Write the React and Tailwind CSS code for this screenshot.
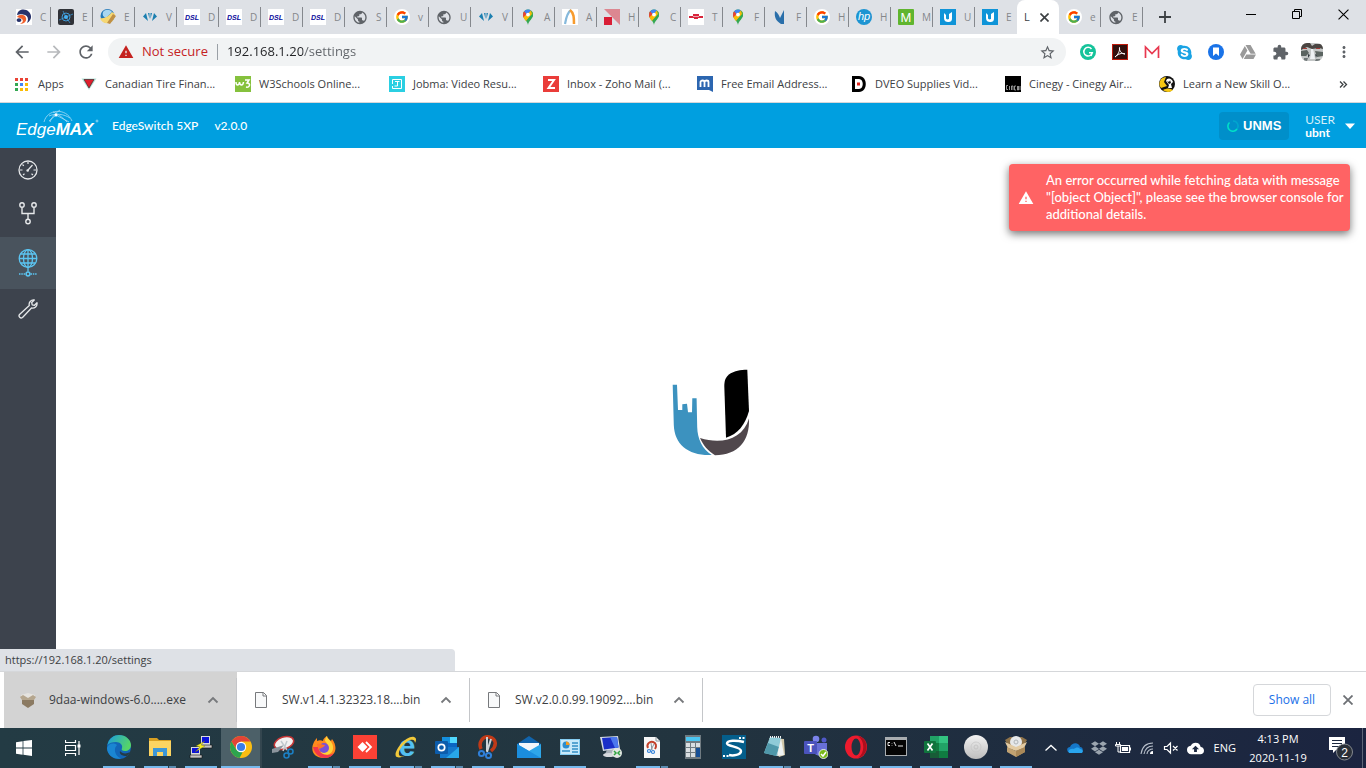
import React from "react";
import { FcGoogle } from "react-icons/fc";
import { FaDropbox, FaGoogleDrive, FaSkype } from "react-icons/fa";
import {
  MdArrowBack,
  MdArrowForward,
  MdCloudUpload,
  MdExtension,
  MdMoreVert,
  MdPublic,
  MdRefresh,
  MdStarBorder,
  MdWarning,
} from "react-icons/md";

const Svg = ({ size = 16, box = 16, children }) => (
  <svg width={size} height={size} viewBox={`0 0 ${box} ${box}`} fill="none" aria-hidden="true" className="block shrink-0">
    {children}
  </svg>
);

const Letter = ({ x = 8, y, size, fill = "#fff", weight = 700, style, children }) => (
  <text x={x} y={y} fontSize={size} fill={fill} fontWeight={weight} fontStyle={style} fontFamily="Liberation Sans, sans-serif" textAnchor="middle">
    {children}
  </text>
);

/* ---------- tab icons ---------- */

const RingIcon = () => (
  <Svg>
    <rect width="16" height="16" fill="#fff" />
    <path d="M1 6C2 0 9-1 13 3c3 3 3 8-2 11 2-4 1-8-4-8.500C4 5 3 6 1 6z" fill="#27326b" />
    <path d="M1 8c2-3 8-3 9 1 1 3-2 6-6 6 2-1 4-3 2-5-1-1-3-1-5-2z" fill="#f0602c" />
    <path d="M1 10c1-1 3-1 4 0s0 3-2 3-3-2-2-3z" fill="#27326b" />
  </Svg>
);

const AtomIcon = () => (
  <Svg>
    <rect width="16" height="16" rx="2" fill="#303238" />
    <path d="M8 8 1 11M8 8l7-3M8 8 5 2M8 8l4 6" stroke="#3a89c0" strokeWidth=".9" />
    <circle cx="8" cy="8" r="4" stroke="#3f9bd8" strokeWidth="1" />
    <circle cx="8" cy="8" r="2" fill="#46b1f5" />
  </Svg>
);

const PencilBallIcon = () => (
  <Svg>
    <circle cx="7.500" cy="7" r="7" fill="#2478b8" />
    <path d="M3 3c2-3 7-3 9 0L6 9C3 8 2 6 3 3z" fill="#a9d6f0" />
    <path d="M0 9c4 1 8-1 12-6l3 2c0 5-3 9-7 9-4 1-7-2-8-5z" fill="#f6d773" />
    <path d="m7 14 6-9 3 2-6 8z" fill="#c09045" />
  </Svg>
);

const FanIcon = () => (
  <Svg>
    <path d="M1 7.500 4 4l2 8zM15 7.500 12 4l-2 8zM6 4h1.500v6zM10 4H8.500v6z" fill="#1b7fb0" />
  </Svg>
);

const DslIcon = () => (
  <Svg>
    <rect width="16" height="16" fill="#fff" />
    <Letter y="11" size="7" fill="#08089a" style="italic">DSL</Letter>
  </Svg>
);

const GlobeIcon = () => <MdPublic size={17} color="#5f6368" />;

const GoogleIcon = () => (
  <span className="flex size-4 items-center justify-center rounded-full bg-white">
    <FcGoogle size={14} />
  </span>
);

const MapsIcon = () => (
  <Svg>
    <path d="M8 16C7.500 12 3 10 3 5.500A5 5 0 0 1 8 .5a5 5 0 0 1 5 5C13 10 8.500 12 8 16z" fill="#34a853" />
    <path d="M3.200 7.500 10 .9a5 5 0 0 1 2.900 4L6 12C4.500 10.300 3.500 9 3.200 7.500z" fill="#fbbc04" />
    <path d="M8 .5c1 0 2 .2 2.900.9L6.500 6.300 4 2.500A5 5 0 0 1 8 .5z" fill="#4285f4" />
    <path d="M4 2.300 6.700 5 3.300 8.500C2.800 6 3 4 4 2.300z" fill="#ea4335" />
    <path d="M10.900 1.400C13 3 13.500 5.500 12.500 8L6 12l6-7z" fill="#34a853" />
    <circle cx="8" cy="5.600" r="1.900" fill="#fff" />
  </Svg>
);

const ArcIcon = () => (
  <Svg>
    <rect width="16" height="16" fill="#fff" />
    <path d="M3 15C4 9 6 3 9 1" stroke="#86b9dc" strokeWidth="2.200" />
    <path d="M8 1c4 3 4 8 4 14" stroke="#f79b2e" strokeWidth="2.500" />
  </Svg>
);

const RedSquaresIcon = () => (
  <Svg>
    <path d="M0 0h16v16z" fill="#dc8791" />
    <path d="M0 8h8v8H0z" fill="#d91e36" />
  </Svg>
);

const TransitIcon = () => (
  <Svg>
    <rect width="16" height="16" fill="#fff" />
    <path d="M5 5h6v2h4v2h-5v1H6V9H1V7h4z" fill="#d8253c" />
    <path d="M5 7.500h6" stroke="#fff" strokeWidth=".6" />
  </Svg>
);

const WolfIcon = () => (
  <Svg>
    <path d="M3 2c3 2 4 4 5 7l4-8v14H9C4 12 2 8 3 2z" fill="#2a6faa" />
  </Svg>
);

const HpIcon = () => (
  <Svg>
    <circle cx="8" cy="8" r="8" fill="#1d94d2" />
    <Letter y="11" size="11" style="italic" weight="400">hp</Letter>
  </Svg>
);

const GreenMIcon = () => (
  <Svg>
    <rect width="16" height="16" rx="1" fill="#60b52f" />
    <Letter y="12.500" size="13" weight="400">M</Letter>
  </Svg>
);

const UbntIcon = () => (
  <Svg>
    <rect width="16" height="16" fill="#0f94d8" />
    <path d="M4 4v5c0 3 2 4 4 4 3 0 4-1 4-4V3l-3 2v5c-2 1-3 0-3-1V6z" fill="#fff" />
  </Svg>
);

const tabs = [
  { icon: RingIcon, title: "C" },
  { icon: AtomIcon, title: "E" },
  { icon: PencilBallIcon, title: "E" },
  { icon: FanIcon, title: "V" },
  { icon: DslIcon, title: "D" },
  { icon: DslIcon, title: "D" },
  { icon: DslIcon, title: "D" },
  { icon: DslIcon, title: "D" },
  { icon: GlobeIcon, title: "S" },
  { icon: GoogleIcon, title: "v" },
  { icon: GlobeIcon, title: "U" },
  { icon: FanIcon, title: "V" },
  { icon: MapsIcon, title: "A" },
  { icon: ArcIcon, title: "A" },
  { icon: RedSquaresIcon, title: "H" },
  { icon: MapsIcon, title: "C" },
  { icon: TransitIcon, title: "T" },
  { icon: MapsIcon, title: "F" },
  { icon: WolfIcon, title: "F" },
  { icon: GoogleIcon, title: "H" },
  { icon: HpIcon, title: "H" },
  { icon: GreenMIcon, title: "M" },
  { icon: UbntIcon, title: "U" },
  { icon: UbntIcon, title: "E" },
  { active: true, title: "L" },
  { icon: GoogleIcon, title: "e" },
  { icon: GlobeIcon, title: "E" },
];

const Cross = ({ size, stroke, width = 1 }) => (
  <Svg size={size} box={10}>
    <path d="m.5.5 9 9m0-9-9 9" stroke={stroke} strokeWidth={width} />
  </Svg>
);

const Tab = ({ tab, divider }) => {
  if (tab.active) {
    return (
      <div className="flex w-[42px] items-center gap-2 rounded-t-lg bg-white pl-[7px] text-[11px] text-[#3c4043]">
        <span className="w-2">{tab.title}</span>
        <button aria-label="Close tab">
          <Cross size={9} stroke="#3c4043" width={1.8} />
        </button>
      </div>
    );
  }
  const Icon = tab.icon;
  return (
    <button className="flex w-[42px] items-center pl-[7px] text-[10px] text-[#85878b]">
      <span className="flex w-4 justify-center">
        <Icon />
      </span>
      <span className="ml-2 w-2 text-left">{tab.title}</span>
      <span className={divider ? "ml-auto h-5 w-px bg-[#85888d]" : "hidden"} />
    </button>
  );
};

const TabStrip = () => (
  <div className="flex h-[34px] bg-[#dee1e6] pl-[9px]">
    {tabs.map((tab, i) => (
      <Tab key={i} tab={tab} divider={i !== 23} />
    ))}
    <button aria-label="New tab" className="ml-4">
      <Svg size={12} box={12}>
        <path d="M6 0v12M0 6h12" stroke="#3c4043" strokeWidth="1.800" />
      </Svg>
    </button>
    <div className="ml-auto flex h-7">
      <button aria-label="Minimize" className="flex w-[46px] items-center justify-center">
        <Svg size={10} box={10}>
          <path d="M0 5.500h10" stroke="#000" />
        </Svg>
      </button>
      <button aria-label="Restore" className="flex w-[46px] items-center justify-center">
        <Svg size={10} box={10}>
          <path d="M.5 2.500h7v7h-7zM2.500 2V.5h7v7H8" stroke="#000" />
        </Svg>
      </button>
      <button aria-label="Close" className="flex w-[46px] items-center justify-center">
        <Cross size={11} stroke="#000" />
      </button>
    </div>
  </div>
);

/* ---------- toolbar ---------- */

const GrammarlyIcon = () => (
  <Svg>
    <circle cx="8" cy="8" r="8" fill="#15c39a" />
    <path d="M11.500 5A4.300 4.300 0 1 0 12.300 8.700H9M12.300 8.700 11 12" stroke="#fff" strokeWidth="1.500" />
  </Svg>
);

const AcrobatIcon = () => (
  <Svg>
    <rect width="16" height="16" fill="#c11a0b" />
    <rect x="1" y="1" width="14" height="14" fill="#33100d" />
    <path d="M3 13c3-2 5-6 4.500-9.500C7 6 9 10 13 10c-3-1.500-7 0-10 3z" stroke="#fff" />
  </Svg>
);

const MailMIcon = () => (
  <Svg>
    <path d="M1.500 14V3L8 9.500 14.500 3v11" stroke="#e8384f" strokeWidth="1.700" />
  </Svg>
);

const SkypeIcon = () => <FaSkype size={17} color="#1aa3e4" />;

const SaveIcon = () => (
  <Svg>
    <circle cx="8" cy="8" r="8" fill="#1a73e8" />
    <path d="M5 3.500h6V12L8 9.500 5 12z" fill="#fff" />
  </Svg>
);

const DriveIcon = () => <FaGoogleDrive size={16} color="#9a9a9a" />;
const PuzzleIcon = () => <MdExtension size={17} color="#5f6368" />;

const AvatarIcon = () => (
  <svg width="22" height="18" viewBox="0 0 22 18" aria-hidden="true">
    <clipPath id="avatar">
      <rect width="22" height="18" rx="6" />
    </clipPath>
    <g clipPath="url(#avatar)">
      <path d="M0 0h22v18H0z" fill="#c3c6c6" />
      <path d="M0 0h9l2 3 3-2h8v5l-4-1-7 1-5-2-6 3z" fill="#4a4542" />
      <path d="M2 5h4v1H2zM15 5h4v1h-4z" fill="#a33a35" />
      <path d="m0 8 6-1 2 3-3 3H0zM14 8l8 1v4l-6 1z" fill="#5b6461" />
      <path d="M10 6h2l1 4 1 6H9l1-5z" fill="#eef1f4" />
      <path d="m7 11 2 1-2 3zM14 11l2 1-1 3z" fill="#333b40" />
      <path d="M3 15h4l-1 3H3zM15 16h4v2h-5z" fill="#6f7677" />
    </g>
  </svg>
);

const extensions = [
  { name: "Grammarly", icon: GrammarlyIcon },
  { name: "Acrobat", icon: AcrobatIcon },
  { name: "Mail", icon: MailMIcon },
  { name: "Skype", icon: SkypeIcon },
  { name: "Save page", icon: SaveIcon },
  { name: "Drive", icon: DriveIcon },
  { name: "Extensions", icon: PuzzleIcon },
  { name: "Profile", icon: AvatarIcon },
];

const Toolbar = () => (
  <div className="flex h-9 items-center bg-white pl-1.5 text-[#5f6368]">
    <button aria-label="Back" className="flex w-8 justify-center">
      <MdArrowBack size={20} />
    </button>
    <button aria-label="Forward" className="flex w-8 justify-center text-[#b7b9bc]">
      <MdArrowForward size={20} />
    </button>
    <button aria-label="Reload" className="flex w-8 justify-center">
      <MdRefresh size={20} />
    </button>
    <div className="ml-1.5 flex h-7 flex-1 items-center rounded-full bg-[#f1f3f4] pr-2.5 pl-2.5">
      <MdWarning size={16} color="#c5221f" />
      <span className="ml-2 text-[13px] text-[#c5221f]">Not secure</span>
      <span className="mx-[9px] h-4 w-px bg-[#9aa0a6]" />
      <input
        aria-label="Address"
        defaultValue="192.168.1.20/settings"
        className="min-w-0 flex-1 bg-[linear-gradient(90deg,#202124_76px,#5f6368_76px)] bg-clip-text text-[13px] text-transparent outline-none"
      />
      <button aria-label="Bookmark this page">
        <MdStarBorder size={17} />
      </button>
    </div>
    <div className="ml-1.5 flex">
      {extensions.map(({ name, icon: Icon }) => (
        <button key={name} aria-label={name} className="flex w-8 items-center justify-center">
          <Icon />
        </button>
      ))}
      <button aria-label="Menu" className="mr-1.5 flex w-8 items-center justify-center">
        <MdMoreVert size={18} />
      </button>
    </div>
  </div>
);

/* ---------- bookmarks ---------- */

const appDots = ["#ea4335", "#ea4335", "#ea4335", "#34a853", "#4285f4", "#fbbc04", "#34a853", "#fbbc04", "#fbbc04"];

const AppsIcon = () => (
  <Svg size={13} box={13}>
    {appDots.map((c, i) => (
      <rect key={i} x={(i % 3) * 5} y={Math.floor(i / 3) * 5} width="3" height="3" fill={c} />
    ))}
  </Svg>
);

const TireIcon = () => (
  <Svg>
    <path d="M.5 2.500h15L8 14z" fill="#b5dfd5" />
    <path d="M3 3.500h10L8 12z" fill="#df1f2d" stroke="#2c1619" strokeWidth=".6" />
  </Svg>
);

const W3Icon = () => (
  <Svg>
    <rect width="16" height="16" fill="#85c13d" />
    <path d="M1 6c0 4 3 4 3.500 0C5 10 8 10 8.500 6M10 4h4l-2 3c4 0 3 5-1 4" stroke="#fff" strokeWidth="1.500" />
  </Svg>
);

const JobmaIcon = () => (
  <Svg>
    <rect width="16" height="16" fill="#2bcfe2" />
    <path d="M3.500 8V3.500h9v9h-9V10M6 5.500h4.500M8.500 5.500V10H5.500" stroke="#fff" />
  </Svg>
);

const ZohoIcon = () => (
  <Svg>
    <rect width="16" height="16" fill="#ea3d3a" />
    <path d="M5 4h6l-5.500 8H12" stroke="#fff" strokeWidth="2" />
  </Svg>
);

const MailComIcon = () => (
  <Svg>
    <path d="M0 0h16v16l-4-2H0z" fill="#2c66b0" />
    <path d="M3.500 11V6c0-2 4-2 4 0v5-5c0-2 4-2 4 0v5" stroke="#fff" strokeWidth="1.800" />
  </Svg>
);

const DveoIcon = () => (
  <Svg>
    <path d="M1 0h7c9 0 9 16 0 16H1z" fill="#000" />
    <path d="M4 3h4c5 0 5 10 0 10H4z" fill="#fff" />
    <rect x="6" y="6.500" width="3" height="3" fill="#e2251c" />
  </Svg>
);

const CinegyIcon = () => (
  <Svg>
    <rect width="16" height="16" fill="#000" />
    <path d="M3 9.500H1.500v4H3M4.500 10v4M6.500 14v-4H8v4M11 10H9.500v4H11M12.500 10v4h1v-4M15 10v4" stroke="#b9b9b9" strokeWidth=".8" />
  </Svg>
);

const SkillIcon = () => (
  <Svg>
    <circle cx="8" cy="8" r="8" fill="#111" />
    <path d="M1 5c1-3 4-4 6-4L5 6l3 4-6 2C0 10 0 7 1 5z" fill="#f6c713" />
    <path d="M4 14c4-2 7-2 10 0-3 3-8 2-10 0z" fill="#f6c713" />
    <path d="M7 5c1-4 6-3 7 1l-2 2 1 4H9l1-3z" fill="#fff" />
    <path d="M8 5c1 1 3 1 3-1l1 3-2 1z" fill="#111" />
  </Svg>
);

const bookmarks = [
  { title: "Canadian Tire Finan...", icon: TireIcon },
  { title: "W3Schools Online...", icon: W3Icon },
  { title: "Jobma: Video Resu...", icon: JobmaIcon },
  { title: "Inbox - Zoho Mail (...", icon: ZohoIcon },
  { title: "Free Email Address...", icon: MailComIcon },
  { title: "DVEO Supplies Vid...", icon: DveoIcon },
  { title: "Cinegy - Cinegy Air...", icon: CinegyIcon },
  { title: "Learn a New Skill O...", icon: SkillIcon },
];

const BookmarksBar = () => (
  <div className="flex h-[33px] items-center border-b border-[#d5d7da] bg-white pb-1 pl-[15px] text-[11px] text-[#3c4043]">
    <a href="#apps" className="flex w-[66px] items-center gap-2.5">
      <AppsIcon />
      Apps
    </a>
    {bookmarks.map(({ title, icon: Icon }) => (
      <a key={title} href="#bookmark" className="flex w-[154px] items-center gap-2 whitespace-nowrap">
        <Icon />
        {title}
      </a>
    ))}
    <button aria-label="More bookmarks" className="mr-[18px] ml-auto">
      <Svg size={9} box={9}>
        <path d="m1 1.500 3 3-3 3m3.500-6 3 3-3 3" stroke="#3c4043" strokeWidth="1.300" />
      </Svg>
    </button>
  </div>
);

/* ---------- switch page ---------- */

const EdgeMaxLogo = () => (
  <svg width="84" height="36" viewBox="0 0 84 36" fill="none" role="img" aria-label="EdgeMAX">
    <path
      d="M28 14C31 1 50-1 56 13M33 8c7-3 15-2 21 2M37 4c6 2 12 8 14 10M44 2c-6 4-9 9-10 12M40 7l-7 6M40 7l13 7"
      stroke="#a7dcf5"
      strokeWidth=".8"
    />
    <circle cx="40" cy="7" r="1.500" fill="#fff" />
    <text x="0" y="27" fontSize="17" fill="#fff" fontStyle="italic" fontFamily="Liberation Sans, sans-serif">
      Edge
      <tspan fontWeight="700">MAX</tspan>
    </text>
    <circle cx="81" cy="13" r="1" stroke="#fff" strokeWidth=".5" />
  </svg>
);

const AppHeader = () => (
  <header className="flex h-[45px] items-center bg-[#009fe0] pr-[11px] pl-4 font-['Lato',sans-serif] text-xs text-white">
    <EdgeMaxLogo />
    <span className="ml-3 font-medium">EdgeSwitch 5XP</span>
    <span className="ml-4 font-medium">v2.0.0</span>
    <button className="ml-auto flex h-7 w-[70px] items-center justify-center gap-1 rounded-sm bg-[#008fca]">
      <Svg size={12} box={12}>
        <path d="M6 1a5 5 0 0 1 4 8" stroke="#00a6cf" strokeWidth="1.600" />
        <path d="M10 9A5 5 0 1 1 2.500 2.500" stroke="#00e0c8" strokeWidth="1.600" />
      </Svg>
      <span className="font-['Liberation_Sans',sans-serif] text-[13px] font-bold">UNMS</span>
    </button>
    <button className="ml-4 flex items-center gap-2.5 text-left leading-[13px]">
      <span>
        <span className="block text-[#d5effa]">USER</span>
        <span className="block font-bold">ubnt</span>
      </span>
      <Svg size={10} box={10}>
        <path d="M0 2.500h10L5 8z" fill="#fff" />
      </Svg>
    </button>
  </header>
);

const GaugeIcon = () => (
  <Svg size={20} box={20}>
    <circle cx="10" cy="10" r="9" stroke="#e6e8ea" strokeWidth="1.300" />
    <path d="M10 2v2M2 10h2.500M15.500 10H18M4.500 4.500l1.300 1.300M5 15l1.500-1.200M15 15l-1.500-1.200M10 10l4.500-5" stroke="#e6e8ea" strokeWidth="1.200" />
    <circle cx="9.700" cy="10.500" r="1.300" fill="#e6e8ea" />
  </Svg>
);

const PortsIcon = () => (
  <Svg size={24} box={24}>
    <g stroke="#e6e8ea" strokeWidth="1.400">
      <circle cx="6" cy="4" r="2.200" />
      <circle cx="18" cy="4" r="2.200" />
      <circle cx="12" cy="20.500" r="2.200" />
      <path d="M6 6.500v6h12v-6M12 12.500v6" />
    </g>
  </Svg>
);

const NetworkIcon = () => (
  <Svg size={28} box={28}>
    <g stroke="#5bc5f2" strokeWidth="1.300">
      <circle cx="14" cy="9.500" r="8.800" />
      <ellipse cx="14" cy="9.500" rx="4.500" ry="8.800" />
      <path d="M14 .5v22M5 9.500h18M6.500 5h15M6.500 14h15" />
      <circle cx="14" cy="25" r="1.900" strokeWidth="1.500" />
      <path d="M5 25h6.500M16.500 25H23" strokeDasharray="1.500 .8" />
    </g>
  </Svg>
);

const WrenchIcon = () => (
  <Svg size={20} box={20}>
    <path
      d="M11.300 6.500c-.8-2.800 1.500-6 5-5.500l-2.600 2.500.5 2.300 2.300.5L19 3.700c.6 3.500-2.500 6-5.500 5.300L4.500 18.500c-2 1.500-4.500-1-3-3z"
      stroke="#e6e8ea"
      strokeWidth="1.300"
      strokeLinejoin="round"
    />
  </Svg>
);

const Sidebar = () => (
  <nav className="w-14 shrink-0 bg-[#3d434d]">
    <a href="#dashboard" aria-label="Dashboard" className="flex h-11 items-center justify-center">
      <GaugeIcon />
    </a>
    <a href="#ports" aria-label="Ports" className="flex h-[45px] items-center justify-center pb-1">
      <PortsIcon />
    </a>
    <a href="#settings" aria-label="Settings" className="flex h-[52px] items-center justify-center bg-[#49535d]">
      <NetworkIcon />
    </a>
    <a href="#tools" aria-label="Tools" className="flex h-11 items-center justify-center pb-1">
      <WrenchIcon />
    </a>
  </nav>
);

const Loader = () => (
  <svg width="78" height="88" viewBox="0 0 78 88" role="img" aria-label="Loading">
    <path
      d="M.7 15.700H5L6 41h4.300v-5.700l4.700-.6 1 8.600h4l.3-14h4.300L25.200 58c.3 12 5 22 14.500 28C17 87 2.500 76 1.800 56z"
      fill="#3c92bf"
    />
    <path d="M75.300.7 77 42C73 56 66 65 54 68.700L52.300 17C52 5 61 1 75.300.7z" fill="#000" />
    <path d="M28 69c22 7 43 1 49-19.500C78 72 66 86 43 86.300 36 82 31 76 28 69z" fill="#50474c" />
  </svg>
);

const Toast = () => (
  <div
    role="alert"
    className="absolute top-4 right-4 flex w-[341px] items-center gap-3 rounded-sm bg-[#ff6364] py-2 pl-[9px] font-['Lato',sans-serif] text-[13px] leading-[17px] font-medium text-white shadow-[0_3px_8px_rgba(0,0,0,0.55)]"
  >
    <MdWarning size={16} className="shrink-0" />
    <p>
      An error occurred while fetching data with message
      <br />
      "[object Object]", please see the browser console for
      <br />
      additional details.
    </p>
  </div>
);

/* ---------- downloads ---------- */

const InstallerIcon = () => (
  <Svg>
    <path d="m1 3 7-2 7 2-1 5H2z" fill="#e5e3df" />
    <path d="m0 5 3-2 5 3 5-3 3 2-2 3-6 1-6-1z" fill="#b5a68e" />
    <path d="M2 8h12v4l-6 4-6-4z" fill="#8b7a62" />
  </Svg>
);

const FileIcon = () => (
  <Svg>
    <path d="M2.500.5h8l3 3v12h-11zM10 .5v3.500h3.500" fill="#f8f9fa" stroke="#77797c" />
  </Svg>
);

const downloads = [
  { name: "9daa-windows-6.0.....exe", icon: InstallerIcon, active: true },
  { name: "SW.v1.4.1.32323.18....bin", icon: FileIcon },
  { name: "SW.v2.0.0.99.19092....bin", icon: FileIcon },
];

const DownloadShelf = () => (
  <div className="flex h-[57px] items-center border-t border-[#d5d7da] bg-white pr-[13px] pl-1">
    {downloads.map(({ name, icon: Icon, active }) => (
      <div key={name} className={active ? "flex h-full w-[233px] items-center bg-[#d3d3d3]" : "flex h-full w-[233px] items-center"}>
        <button className="flex flex-1 items-center gap-[13px] pl-4 text-xs whitespace-nowrap text-[#3c4043]">
          <Icon />
          {name}
        </button>
        <button aria-label="More options" className="mr-[17px]">
          <Svg size={12} box={12}>
            <path d="m1.500 8.500 4.500-4.500 4.500 4.500" stroke="#77797c" strokeWidth="1.800" />
          </Svg>
        </button>
        <span className="h-11 w-px bg-[#c4c6c9]" />
      </div>
    ))}
    <button className="mr-3 ml-auto h-8 w-[78px] rounded-sm border border-[#d5d7da] text-xs font-medium text-[#1a6fe8]">Show all</button>
    <button aria-label="Close downloads">
      <Cross size={10} stroke="#6d7074" width={1.8} />
    </button>
  </div>
);

/* ---------- taskbar ---------- */

const EdgeIcon = () => (
  <Svg size={24} box={24}>
    <defs>
      <linearGradient id="edge" x1="0" y1="0" x2="1" y2="0.400">
        <stop offset="0" stopColor="#1a9be0" />
        <stop offset="1" stopColor="#55d568" />
      </linearGradient>
    </defs>
    <circle cx="12" cy="12" r="12" fill="#1266b8" />
    <path d="M.5 10C2 3 7 0 12 0c7 0 12 5 12 10 0 4-3 6-6 6s-4-1-3-3c1-3-2-6-6-6-4 0-7 1-8.500 3z" fill="url(#edge)" />
    <path d="M13 16c2 3 7 3 10 1-1 2-2 3-3 4-5 0-8-2-7-5z" fill="#243b46" />
    <path d="M0 13c1-4 6-6 10-3-4 4-2 11 4 13.500C7 25 0 20 0 13z" fill="#1a86d2" />
  </Svg>
);

const ExplorerIcon = () => (
  <Svg size={24} box={24}>
    <path d="M1 3h8l2 2h12v5H1z" fill="#d9a022" />
    <path d="M1 6h22v15H1z" fill="#fcd462" />
    <path d="M5 21v-8h14v8h-4v-4H9v4z" fill="#3e97d6" />
  </Svg>
);

const PuttyIcon = () => (
  <Svg size={24} box={24}>
    <path d="M12 1h9v9h-9zM2 12h9v8H2z" fill="#dadada" />
    <path d="M13 2h7v6h-7zM3 13h7v5H3z" fill="#0b12d8" />
    <path d="M11 10h12v3H13zM1 20h12v3H1z" fill="#c4c4c4" stroke="#111" strokeWidth=".6" />
    <path d="m16 6-9 5 4 1-5 5 10-6-4-1z" fill="#f5ec1e" stroke="#665f00" strokeWidth=".3" />
  </Svg>
);

const ChromeIcon = () => (
  <Svg size={22} box={22}>
    <circle cx="11" cy="11" r="11" fill="#fbbd12" />
    <path d="M1.500 5.500A11 11 0 0 1 20.500 5.500H11L6.500 13.500z" fill="#e24437" />
    <path d="m1.500 5.500 5 8.500 6 2.500-3 5.400A11 11 0 0 1 1.500 5.500z" fill="#2da44e" />
    <circle cx="11" cy="11" r="5.200" fill="#fff" />
    <circle cx="11" cy="11" r="4.100" fill="#3b7de8" />
  </Svg>
);

const SnipIcon = () => (
  <Svg size={24} box={24}>
    <ellipse cx="13" cy="8" rx="10" ry="6" fill="#f3f0f0" stroke="#c33535" strokeWidth="1.500" transform="rotate(-18 13 8)" />
    <path d="m1 14 12-4-6 7-6 1z" fill="#8c959d" />
    <path d="m10 6 6 9M16 6l-4 10" stroke="#c2c8cd" strokeWidth="1.500" />
    <circle cx="19.500" cy="16.500" r="2.500" stroke="#1b7fc4" strokeWidth="1.600" />
    <circle cx="15.500" cy="20.500" r="2.500" stroke="#1b7fc4" strokeWidth="1.600" />
  </Svg>
);

const FirefoxIcon = () => (
  <Svg size={24} box={24}>
    <path d="M2 7c1-2 2-3 3-4v3c2-1 4-1 6 0 0-2 2-4 4-5 0 2 2 3 4 5l1-2c7 9 3 19-8 19S-2 15 2 7z" fill="#ff8a1c" />
    <path d="M15 1c0 4 7 5 6 13-1 6-9 8-13 3 7 2 11-5 5-11 0-2 1-4 2-5z" fill="#ffd33a" />
    <path d="M1 12c1 6 6 11 12 11 4 0 7-2 9-5-6 4-15 2-16-6z" fill="#f3364c" />
    <circle cx="12" cy="13" r="5" fill="#7950d8" />
    <path d="M5 9c4-1 5 1 8 1-1 3-4 2-5 4-2-1-3-3-3-5z" fill="#ff7327" />
  </Svg>
);

const AnyDeskIcon = () => (
  <Svg size={24} box={24}>
    <rect width="24" height="24" fill="#fb4135" />
    <path d="m9.500 7 5 5-5 5-5-5z" fill="#fff" />
    <path d="m13 7 5 5-5 5" stroke="#fff" strokeWidth="1.800" />
  </Svg>
);

const IeIcon = () => (
  <Svg size={24} box={24}>
    <Letter x={13} y="21" size="30" fill="#53c1f2">e</Letter>
    <path d="M3 22C-3 20 11 0 20 2c3 1 2 4 1 6 0-3-2-4-5-3C9 8 2 18 6 21c2 1 4 0 6-1-3 2-7 3-9 2z" fill="#f2c93a" />
  </Svg>
);

const OutlookIcon = () => (
  <Svg size={24} box={24}>
    <path d="M7 2h15v12H7z" fill="#1490df" />
    <path d="M15 2h7v6h-7z" fill="#50d9ff" />
    <path d="M7 8h8v6H7zM15 8h7v6h-7z" fill="#0a66c2" />
    <path d="M5 12h19v11H5z" fill="#1479cc" />
    <path d="m24 12-13 11h13z" fill="#28a8ea" />
    <rect y="6" width="13" height="13" rx="1" fill="#0c5cab" />
    <circle cx="6.500" cy="12.500" r="3.200" stroke="#fff" strokeWidth="1.700" />
  </Svg>
);

const ScissorsIcon = () => (
  <Svg size={24} box={24}>
    <path d="M5 14C2 7 7 1 13 2c8 2 8 9 2 14" stroke="#c13a18" strokeWidth="3.500" />
    <path d="m11 2 0 14M15 4l-4 13" stroke="#cdd3d8" strokeWidth="2" />
    <circle cx="5.500" cy="18.500" r="2.600" stroke="#2f7fd8" strokeWidth="2" />
    <circle cx="12.500" cy="20.500" r="2.600" stroke="#2f7fd8" strokeWidth="2" />
  </Svg>
);

const MailIcon = () => (
  <Svg size={24} box={24}>
    <path d="M0 9 12 1l12 8v14H0z" fill="#1164ac" />
    <path d="m2 8h20v3l-10 6L2 11z" fill="#f4f7fa" />
    <path d="m0 9 12 7L24 9v14H0z" fill="#2ea7ea" />
    <path d="M0 9v14h24z" fill="#1b8ede" />
  </Svg>
);

const PanelIcon = () => (
  <Svg size={24} box={24}>
    <rect x="2" y="4" width="20" height="16" fill="#85cdf2" />
    <rect x="3" y="5" width="18" height="14" fill="#c8e9fa" />
    <circle cx="8" cy="10" r="3.500" fill="#2d8ece" />
    <path d="M8 10V6.500a3.500 3.500 0 0 1 3.500 3.500z" fill="#f49b21" />
    <path d="M14 8h6M14 11h6M14 14h6M14 17h6M4 16h8" stroke="#338fc5" strokeWidth="1.300" />
  </Svg>
);

const RemoteIcon = () => (
  <Svg size={24} box={24}>
    <path d="m1 2 18-1 2 13-17 2z" fill="#d3dae4" />
    <path d="m3 3 15-1 1.500 10.500L5 14.500z" fill="#1a2fc8" />
    <path d="m11 2 7 0 1.500 10.500L16 13z" fill="#4c78ee" />
    <path d="M8 15h6l1 4H6z" fill="#aab2ba" />
    <ellipse cx="10" cy="20" rx="6" ry="2" fill="#d7dade" />
    <circle cx="18" cy="18" r="5" fill="#e2e6e2" />
    <path d="m15 16 2 2-2 2M21 16l-2 2 2 2" stroke="#30a441" strokeWidth="1.500" />
  </Svg>
);

const SnipDocIcon = () => (
  <Svg size={24} box={24}>
    <path d="M4 2h12l4 4v17H4z" fill="#f7f7f7" />
    <path d="M16 2v4h4" stroke="#8e9499" />
    <path d="M8 13c-2-4 2-7 5-6s4 4 2 7" stroke="#c2412a" strokeWidth="2" />
    <path d="m11 8 1 7M14 9l-3 6" stroke="#88939c" />
    <circle cx="9" cy="16" r="1.500" stroke="#2f7fd8" strokeWidth="1.200" />
    <circle cx="13" cy="17" r="1.500" stroke="#2f7fd8" strokeWidth="1.200" />
  </Svg>
);

const CalcIcon = () => (
  <Svg size={24} box={24}>
    <rect x="4" width="16" height="24" fill="#707b81" />
    <rect x="5" y="2" width="14" height="4" fill="#4cc6f1" />
    {[8, 13, 18].map((y) => (
      <path key={y} d={`M5 ${y}h4v4H5zM10 ${y}h4v4h-4zM15 ${y}h4v4h-4z`} fill="#d9dee1" />
    ))}
    <path d="M15 13h4v9h-4z" fill="#164f95" />
  </Svg>
);

const SIcon = () => (
  <Svg size={24} box={24}>
    <rect width="24" height="24" fill="#045e8b" />
    <path d="M22 7C14 5 5 5 5 8.500c0 3 14 3 14 7.500 0 4-8 5-12 4" stroke="#fff" strokeWidth="2.500" />
    <path d="M17 3h2M20.500 3h2M1 21h2M4.500 21h2" stroke="#fff" strokeWidth="2" />
  </Svg>
);

const NotepadIcon = () => (
  <Svg size={24} box={24}>
    <path d="m6 3 15 1 1 16-6 2z" fill="#d1c7a9" />
    <path d="m7 2 11 1-4 18-13-3z" fill="#8fcbd8" />
    <path d="m5 8 11 4-3 9-12-3z" fill="#4f98aa" />
    <path d="m18 3 3 17-7 1z" fill="#edf2f3" />
    <path d="M7 2h12" stroke="#eef0f2" strokeWidth="2" strokeDasharray="1 1" />
  </Svg>
);

const TeamsIcon = () => (
  <Svg size={24} box={24}>
    <circle cx="12" cy="4" r="3.300" fill="#7b83eb" />
    <circle cx="20" cy="5" r="2.500" fill="#5059c9" />
    <path d="M8 8h15v8c-2 6-11 6-14 1z" fill="#6870d6" />
    <rect y="6" width="13" height="13" rx="1" fill="#4b53bc" />
    <Letter x={6.5} y="16.500" size="11">T</Letter>
    <circle cx="19.500" cy="19" r="4.500" fill="#78b918" stroke="#fff" strokeWidth=".8" />
    <path d="m17 19 2 2 3-4" stroke="#fff" strokeWidth="1.500" />
  </Svg>
);

const OperaIcon = () => (
  <Svg size={24} box={24}>
    <ellipse cx="12" cy="12" rx="11" ry="11.500" fill="#ed1b2e" />
    <path d="M14 1c11 2 12 19 0 22 7-5 7-17 0-22z" fill="#ad0f1d" />
    <ellipse cx="12" cy="12" rx="4.500" ry="8.500" fill="#213340" />
  </Svg>
);

const CmdIcon = () => (
  <Svg size={24} box={24}>
    <rect x="1" y="2" width="22" height="19" fill="#a9adb0" />
    <rect x="2" y="5" width="20" height="15" fill="#050505" />
    <path d="M6 7.500H4v3h2M8 8v.5M8 10v.5M10 7l2 4M14 11h5" stroke="#e6e6e6" />
  </Svg>
);

const ExcelIcon = () => (
  <Svg size={24} box={24}>
    <path d="M6 1h9v7H6z" fill="#21a366" />
    <path d="M15 1h9v7h-9z" fill="#33c481" />
    <path d="M6 8h9v8H6z" fill="#107c41" />
    <path d="M15 8h9v8h-9z" fill="#21a366" />
    <path d="M6 16h18v7H6z" fill="#185c37" />
    <path d="M15 16h9v7h-9z" fill="#107c41" />
    <rect y="6" width="12" height="12" rx="1" fill="#10743d" />
    <path d="m3.500 8.500 5 7m0-7-5 7" stroke="#fff" strokeWidth="1.700" />
  </Svg>
);

const DiscIcon = () => (
  <Svg size={24} box={24}>
    <defs>
      <linearGradient id="disc" x1="0" y1="0" x2="0" y2="1">
        <stop offset="0" stopColor="#f2f2f2" />
        <stop offset="1" stopColor="#bdbdbd" />
      </linearGradient>
    </defs>
    <circle cx="12" cy="12" r="12" fill="url(#disc)" />
    <circle cx="12" cy="12" r="5" stroke="#c6c6c6" strokeWidth=".8" />
    <circle cx="12" cy="12" r="2" stroke="#c0c0c0" strokeWidth=".8" />
  </Svg>
);

const BoxIcon = () => (
  <Svg size={24} box={24}>
    <path d="m1 5 5-3h12l5 3-3 5H4z" fill="#8f7349" />
    <circle cx="12" cy="7" r="6" fill="#e6e8ea" />
    <circle cx="12" cy="7" r="2" stroke="#afb4b8" />
    <path d="m1 7 11 5 11-5-3 6-8 3-8-3z" fill="#e3cba3" />
    <path d="M3 12v5l9 5 9-5v-5l-9 4z" fill="#c1a272" />
    <path d="m12 16 9-4v5l-9 5z" fill="#a98858" />
  </Svg>
);

// mark: "one" = single window, "many" = grouped windows
const pinned = [
  { name: "Edge", icon: EdgeIcon, mark: "one" },
  { name: "File Explorer", icon: ExplorerIcon, mark: "many" },
  { name: "PuTTY", icon: PuttyIcon, mark: "one" },
  { name: "Chrome", icon: ChromeIcon, mark: "active" },
  { name: "Snipping", icon: SnipIcon },
  { name: "Firefox", icon: FirefoxIcon, mark: "many" },
  { name: "AnyDesk", icon: AnyDeskIcon, mark: "one" },
  { name: "Internet Explorer", icon: IeIcon, mark: "many" },
  { name: "Outlook", icon: OutlookIcon, mark: "many" },
  { name: "Snipping Tool", icon: ScissorsIcon, mark: "one" },
  { name: "Mail", icon: MailIcon, mark: "one" },
  { name: "Control Panel", icon: PanelIcon, mark: "one" },
  { name: "Remote Desktop", icon: RemoteIcon },
  { name: "Captures", icon: SnipDocIcon, mark: "many" },
  { name: "Calculator", icon: CalcIcon },
  { name: "Streams", icon: SIcon },
  { name: "Notepad", icon: NotepadIcon, mark: "many" },
  { name: "Teams", icon: TeamsIcon, mark: "one" },
];

const running = [
  { name: "Opera", icon: OperaIcon, mark: "one" },
  { name: "Command Prompt", icon: CmdIcon, mark: "one" },
  { name: "Excel", icon: ExcelIcon, mark: "one" },
  { name: "Disc", icon: DiscIcon, mark: "one" },
  { name: "Installer", icon: BoxIcon, mark: "one" },
];

const TaskButton = ({ app, wide }) => {
  const Icon = app.icon;
  const active = app.mark === "active";
  return (
    <button
      aria-label={app.name}
      className={`flex h-10 shrink-0 flex-col items-center ${wide ? "w-[41px]" : "w-10"} ${active ? "border-r-2 border-[#34464f] bg-[#4c6068]" : ""}`}
    >
      <span className="flex flex-1 items-center">
        <Icon />
      </span>
      {app.mark ? (
        <span className={`flex h-0.5 bg-[#76b9ed] ${active ? "w-full" : "w-8"}`}>
          {app.mark === "many" && <span className="ml-auto w-2 border-l border-[#243b46] bg-[#5a8bb0]" />}
        </span>
      ) : (
        <span className="h-0.5" />
      )}
    </button>
  );
};

const Tray = () => (
  <div className="ml-auto flex h-full shrink-0 items-center text-white">
    <button aria-label="Show hidden icons" className="flex w-6 justify-center">
      <Svg size={12} box={12}>
        <path d="m.5 8.500 5.500-5 5.500 5" stroke="#fff" strokeWidth="1.300" />
      </Svg>
    </button>
    <span className="flex w-6 justify-center">
      <Svg>
        <path d="M1 12C-1 9 1 7 3 7c2-5 9-5 10 0 3 0 4 4 1 6z" fill="#1577c8" />
        <path d="M2 13c-2-3 2-5 5-4 2-2 5-2 6 0 3 0 4 4 1 4z" fill="#29a5ee" />
      </Svg>
    </span>
    <span className="flex w-6 justify-center">
      <FaDropbox size={16} color="#9ba5af" />
    </span>
    <span className="flex w-6 justify-center">
      <Svg>
        <path d="M5.500 5.500h9v7h-9zM15.500 7.500v3" stroke="#fff" strokeWidth="1.200" />
        <path d="M7 7h6v4H7z" fill="#fff" />
        <path d="M1.500 2v2M4.500 2v2M3 6v6h2M.5 4.500h5v1.500h-5z" stroke="#fff" />
      </Svg>
    </span>
    <span className="flex w-6 justify-center">
      <Svg>
        <g stroke="#b8c0cb" strokeWidth="1.100">
          <path d="M2 14C3 7 7 3 14 3M5 14c1-5 4-8 9-8M8 14c0-3 3-5 6-5" />
        </g>
        <path d="M11 14a3 3 0 0 1 3-3v3z" fill="#fff" />
      </Svg>
    </span>
    <span className="flex w-6 justify-center">
      <Svg>
        <path d="M1.500 6.500H4L7.500 3v10L4 9.500H1.500zM10 6l4.500 4.500m0-4.500L10 10.500" stroke="#fff" strokeWidth="1.200" />
      </Svg>
    </span>
    <span className="flex w-6 justify-center">
      <MdCloudUpload size={17} />
    </span>
    <span className="w-[29px] text-right text-[11px]">ENG</span>
    <div className="ml-2 w-[68px] text-center text-[11px] leading-[19px]">
      <div>4:13 PM</div>
      <div>2020-11-19</div>
    </div>
    <button aria-label="Notifications" className="ml-4">
      <Svg size={26} box={26}>
        <path d="M1 2h16v13H8l-3 3v-3H1z" fill="#fff" />
        <path d="M4 5.500h10M4 8.500h10M4 11.500h7" stroke="#1e2a3f" />
        <circle cx="16.500" cy="17" r="8" fill="#2a3038" stroke="#84898f" />
        <Letter x={16.5} y="21.500" size="12" weight="400">2</Letter>
      </Svg>
    </button>
    <span className="ml-2 h-full w-px bg-[#5c6577]" />
    <span className="w-[3px]" />
  </div>
);

const Taskbar = () => (
  <div className="flex h-10 items-center bg-linear-to-r from-[#233b44] via-[#22343f] to-[#1b2440]">
    <button aria-label="Start" className="flex w-12 shrink-0 justify-center">
      <Svg>
        <path d="m0 2.200 6.600-1v6.400H0zM7.400 1.100 16 0v7.600H7.400zM0 8.400h6.600v6.400l-6.600-1zM7.400 8.400H16V16l-8.600-1.200z" fill="#fff" />
      </Svg>
    </button>
    <button aria-label="Task view" className="flex w-[50px] shrink-0 justify-center">
      <Svg>
        <path d="M.5 0v2.500h10V0M.5 5.500h10v5H.5zM.5 16v-2.500h10V16M14 1v14" stroke="#fff" strokeWidth="1.200" />
        <path d="M12.500 4.500h3v3h-3z" fill="#fff" />
      </Svg>
    </button>
    {pinned.map((app) => (
      <TaskButton key={app.name} app={app} wide />
    ))}
    {running.map((app) => (
      <TaskButton key={app.name} app={app} />
    ))}
    <Tray />
  </div>
);

const App = () => {
  return (
    <div className="flex h-screen flex-col overflow-hidden bg-white font-['Open_Sans','Noto_Sans',sans-serif]">
      <TabStrip />
      <Toolbar />
      <BookmarksBar />
      <AppHeader />
      <div className="relative flex flex-1">
        <Sidebar />
        <main className="flex flex-1 items-center justify-center pt-1.5">
          <Loader />
        </main>
        <Toast />
        <div className="absolute bottom-0 left-0 h-[22px] w-1/3 rounded-tr-sm bg-[#dee1e6] pl-[5px] text-[11px] leading-[22px] text-[#3c4043]">
          https://192.168.1.20/settings
        </div>
      </div>
      <DownloadShelf />
      <Taskbar />
    </div>
  );
};

export default App;
